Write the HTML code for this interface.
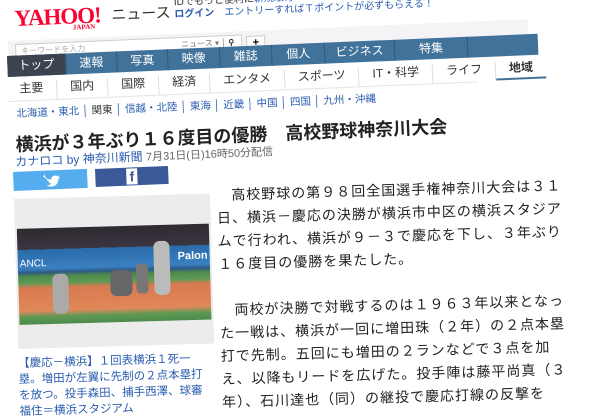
<!DOCTYPE html>
<html><head><meta charset="utf-8"><style>
*{margin:0;padding:0;box-sizing:border-box}
body{width:600px;height:410px;overflow:hidden;background:#fff;position:relative;font-family:"Liberation Sans","Noto Sans CJK JP",sans-serif}
.r{position:absolute;transform-origin:0 0;white-space:nowrap}
.hd{transform:rotate(-2.4deg)}
.bd{transform:rotate(-1.6deg)}
.nav{display:flex;height:21px;background:#41729a;color:#fff;font-size:12px;width:531px}
.nav div{flex:0 0 auto;text-align:center;line-height:21px;border-right:1px solid #2f5c80}
.sub{display:flex;font-size:12px;color:#333;width:500px}
.sub div{flex:0 0 auto;padding:0 13px;border-right:1px solid #ddd;line-height:14px;white-space:nowrap}
.reg{font-size:10.5px;color:#2a5db0}
.reg span{color:#333}
.body{white-space:normal}
.body p{font-size:14px;line-height:23px;color:#222;letter-spacing:1px}
</style></head><body>

<div class="r hd" style="left:14px;top:9px;width:600px">
 <span style="color:#ff0033;font:bold 23px/20px 'Liberation Serif',serif;letter-spacing:-1px">YAHOO!</span>
 <span style="position:absolute;left:97px;top:-1px;font-size:15px;color:#333">ニュース</span>
 <div style="position:absolute;left:58px;top:17px;color:#ff0033;font:bold 7px 'Liberation Serif',serif">JAPAN</div>
 <div style="position:absolute;left:160px;top:-9px;font-size:10px;color:#333">IDでもっと便利に<span style="color:#2a5db0">新規取得</span></div>
 <div style="position:absolute;left:160px;top:3px;font-size:10px;color:#2a5db0;font-weight:bold">ログイン　<span style="font-weight:normal">エントリーすればＴポイントが必ずもらえる！</span></div>
</div>

<div class="r hd" style="left:8px;top:41px;width:520px;height:24px;background:#f4f4f6"></div>
<div class="r hd" style="left:15px;top:44px;width:227px;height:16px;background:#fff;border:1px solid #ccc;font-size:8px;color:#aaa;line-height:14px;padding-left:5px">キーワードを入力<span style="position:absolute;left:165px;color:#777">ニュース ▾ │ <b style="color:#333">⚲</b></span></div>
<div class="r hd" style="left:246px;top:36px;width:19px;height:15px;background:#fff;border:1px solid #ccc;font-size:11px;text-align:center;line-height:13px;font-weight:bold">+</div>

<div class="r hd nav" style="left:7px;top:56px">
 <div style="width:59px;background:#3d4350">トップ</div><div style="width:51px">速報</div><div style="width:51px">写真</div><div style="width:52px">映像</div><div style="width:52px">雑誌</div><div style="width:53px">個人</div><div style="width:70px">ビジネス</div><div style="width:73px">特集</div><div style="width:70px;border:none"></div>
</div>

<div class="r hd sub" style="left:7px;top:82px">
 <div style="padding-left:12px">主要</div><div>国内</div><div>国際</div><div>経済</div><div>エンタメ</div><div>スポーツ</div><div>IT・科学</div><div>ライフ</div><div style="border:none;font-weight:bold;border-bottom:2px solid #41729a;padding-bottom:3px">地域</div>
</div>
<div class="r hd" style="left:8px;top:101px;width:470px;border-top:1px solid #e4e4e4"></div>

<div class="r hd reg" style="left:16px;top:106px">北海道・東北 │ <span>関東</span> │ 信越・北陸 │ 東海 │ 近畿 │ 中国 │ 四国 │ 九州・沖縄</div>

<div class="r hd" style="left:15px;top:131px;font-size:18px;font-weight:bold;color:#222">横浜が３年ぶり１６度目の優勝　高校野球神奈川大会</div>
<div class="r hd" style="left:15px;top:153px;font-size:12px;color:#2a5db0">カナロコ by 神奈川新聞 <span style="color:#666;font-size:11px">7月31日(日)16時50分配信</span></div>

<div class="r hd" style="left:13px;top:172px;width:74px;height:19px;background:#55acee">
 <svg width="74" height="19" viewBox="0 0 74 19"><path d="M30 6c2 2 5 3 8 3 0-3 3-5 6-3l2-1-1 2 2 0-2 2c0 6-6 9-12 6 2 0 4-1 5-2-2 0-3-1-3-2h1c-2-1-3-2-3-3h1c-2-1-3-3-2-5z" fill="#fff"/></svg>
</div>
<div class="r hd" style="left:95px;top:169px;width:73px;height:18px;background:#3b5998;color:#fff;text-align:center;font:bold 14px/18px 'Liberation Sans',sans-serif"><span style="background:#fff;color:#3b5998;padding:0 3px">f</span></div>

<div class="r bd" style="left:14px;top:199px;width:196px;height:150px;background:#ececec">
 <div style="position:absolute;left:2px;top:30px;width:192px;height:96px;background:linear-gradient(#2e2a30 0,#3a3540 22%,#2a6aa8 22%,#3a80c0 42%,#2d5a88 46%,#4f8a4a 50%,#5d9a55 57%,#d87a50 62%,#e0885a 86%,#5f9a55 92%,#4d8a4a 100%)">
  <div style="position:absolute;left:34px;top:46px;width:16px;height:40px;background:#aaa;border-radius:6px"></div>
  <div style="position:absolute;left:92px;top:44px;width:22px;height:26px;background:#666;border-radius:6px"></div>
  <div style="position:absolute;left:118px;top:38px;width:12px;height:30px;background:#777;border-radius:4px"></div>
  <div style="position:absolute;left:136px;top:16px;width:16px;height:54px;background:#bbb;border-radius:6px"></div>
  <div style="position:absolute;left:2px;top:30px;color:#fff;font-size:10px">ANCL</div>
  <div style="position:absolute;left:160px;top:26px;color:#fff;font-size:11px;font-weight:bold">Palon</div>
 </div>
</div>
<div class="r bd" style="left:18px;top:356px;width:190px;font-size:11.5px;line-height:16px;color:#2a5db0;white-space:normal">【慶応－横浜】１回表横浜１死一塁。増田が左翼に先制の２点本塁打を放つ。投手森田、捕手西澤、球審福住＝横浜スタジアム</div>

<div class="r bd body" style="left:216px;top:184px;width:352px">
 <p>　高校野球の第９８回全国選手権神奈川大会は３１日、横浜－慶応の決勝が横浜市中区の横浜スタジアムで行われ、横浜が９－３で慶応を下し、３年ぶり１６度目の優勝を果たした。</p>
 <p>&nbsp;</p>
 <p>　両校が決勝で対戦するのは１９６３年以来となった一戦は、横浜が一回に増田珠（２年）の２点本塁打で先制。五回にも増田の２ランなどで３点を加え、以降もリードを広げた。投手陣は藤平尚真（３年）、石川達也（同）の継投で慶応打線の反撃を</p>
</div>
</body></html>
